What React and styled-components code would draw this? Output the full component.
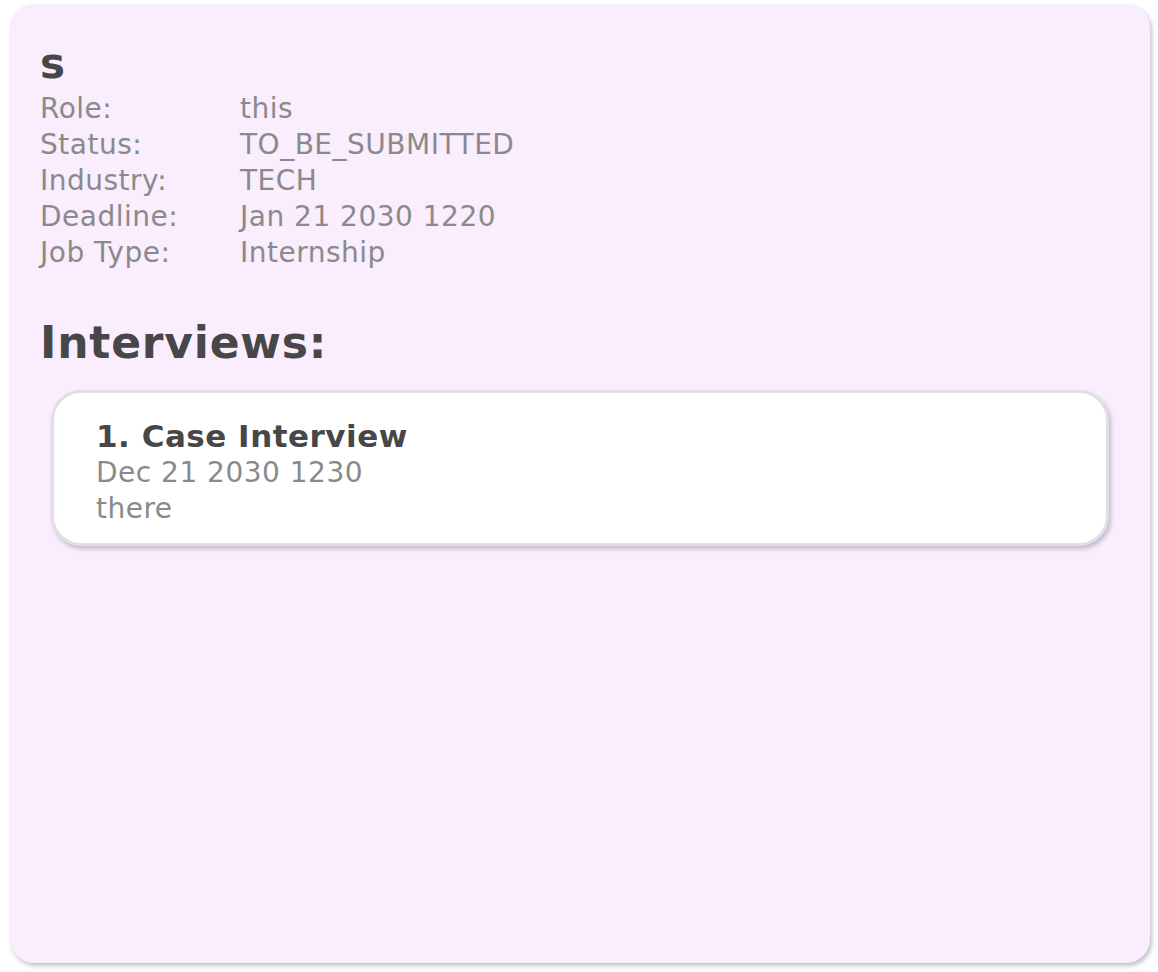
import React from "react";
import styled, { createGlobalStyle } from "styled-components";

const Global = createGlobalStyle`
  html, body { margin: 0; padding: 0; background: #ffffff; }
  body { font-family: "DejaVu Sans", Verdana, sans-serif; }
`;

const Page = styled.div`
  padding: 4px 8px 9px 10px;
`;

const Card = styled.div`
  box-sizing: border-box;
  width: 1140px;
  height: 959px;
  background: #f9edfe;
  border-radius: 24px;
  box-shadow: 2px 3px 4px rgba(90, 80, 95, 0.35);
  padding: 36px 30px 0 30px;
  display: flex;
  flex-direction: column;
`;

const Title = styled.div`
  font-size: 42px;
  font-weight: bold;
  line-height: 48px;
  color: #474747;
  margin-bottom: 3px;
`;

const Details = styled.div`
  display: grid;
  grid-template-columns: 200px 1fr;
`;

const Text = styled.div`
  font-size: 28px;
  line-height: 36px;
  letter-spacing: 0.5px;
  color: #8a8a8a;
  white-space: nowrap;
`;

const Heading = styled.div`
  font-size: 44px;
  font-weight: bold;
  line-height: 52px;
  letter-spacing: 0.8px;
  color: #474747;
  margin-top: 46px;
`;

const InterviewList = styled.div`
  display: flex;
  flex-direction: column;
  margin: 21px 11px 0 11px;
  gap: 12px;
`;

const InterviewCard = styled.div`
  background: #ffffff;
  border: 3px solid #e0e0e0;
  border-radius: 30px;
  box-shadow: 2px 3px 4px rgba(110, 90, 120, 0.35);
  padding: 24px 42px 16px 42px;
`;

const InterviewTitle = styled.div`
  font-size: 31px;
  font-weight: bold;
  line-height: 38px;
  letter-spacing: 0.5px;
  color: #474747;
`;

const details = [
  ["Role:", "this"],
  ["Status:", "TO_BE_SUBMITTED"],
  ["Industry:", "TECH"],
  ["Deadline:", "Jan 21 2030 1220"],
  ["Job Type:", "Internship"],
];

const interviews = [
  { title: "Case Interview", date: "Dec 21 2030 1230", place: "there" },
];

export default function App() {
  return (
    <>
      <Global />
      <Page>
        <Card>
          <Title>s</Title>
          <Details>
            {details.map(([k, v]) => (
              <React.Fragment key={k}>
                <Text>{k}</Text>
                <Text>{v}</Text>
              </React.Fragment>
            ))}
          </Details>
          <Heading>Interviews:</Heading>
          <InterviewList>
            {interviews.map((it, i) => (
              <InterviewCard key={i}>
                <InterviewTitle>
                  {i + 1}. {it.title}
                </InterviewTitle>
                <Text>{it.date}</Text>
                <Text>{it.place}</Text>
              </InterviewCard>
            ))}
          </InterviewList>
        </Card>
      </Page>
    </>
  );
}
